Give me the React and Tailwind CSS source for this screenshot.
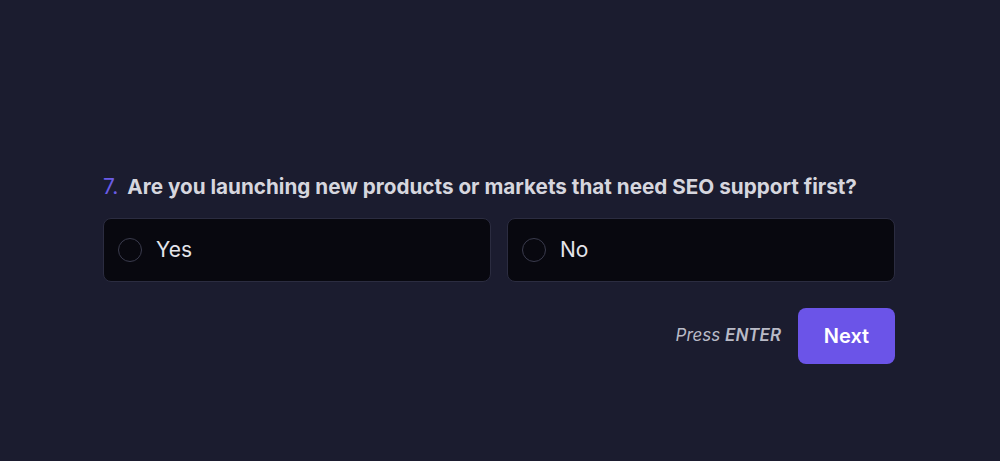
import React, { useState } from 'react';

const options = ['Yes', 'No'];

const App = () => {
    const [selected, setSelected] = useState(null);

    return (
        <div
            className="min-h-screen w-full bg-[#1b1c2f] pt-[173px]"
            style={{ fontFamily: 'Inter, "Noto Sans", sans-serif' }}
        >
            <div className="mx-auto w-[794px] pr-[2px]">
                <h2 className="flex items-baseline text-[20px] leading-7">
                    <span className="text-[#6b5ce7] mr-[9px] text-[21px]">7.</span>
                    <span className="font-bold text-[20.7px] text-[#d6d6de]">
                        Are you launching new products or markets that need SEO support first?
                    </span>
                </h2>
                <div className="mt-[17px] grid grid-cols-2 gap-4">
                    {options.map((opt) => (
                        <button
                            key={opt}
                            onClick={() => setSelected(opt)}
                            className="flex h-[64px] items-center rounded-lg border border-[#2b2c40] bg-[#08080f] pl-[14px] text-left"
                        >
                            <span className="h-6 w-6 rounded-full border border-[#3a3b4d]" />
                            <span className="ml-[14px] text-[21px] text-[#e4e4ea]">{opt}</span>
                        </button>
                    ))}
                </div>
                <div className="mt-[26px] flex items-center justify-end gap-[17px]">
                    <span className="text-[17px] italic text-[#b9bac6]">
                        Press <span className="font-semibold">ENTER</span>
                    </span>
                    <button className="h-14 w-[97px] rounded-lg bg-[#6b54e8] text-[20px] font-semibold text-white">
                        Next
                    </button>
                </div>
            </div>
        </div>
    );
};

export default App;
